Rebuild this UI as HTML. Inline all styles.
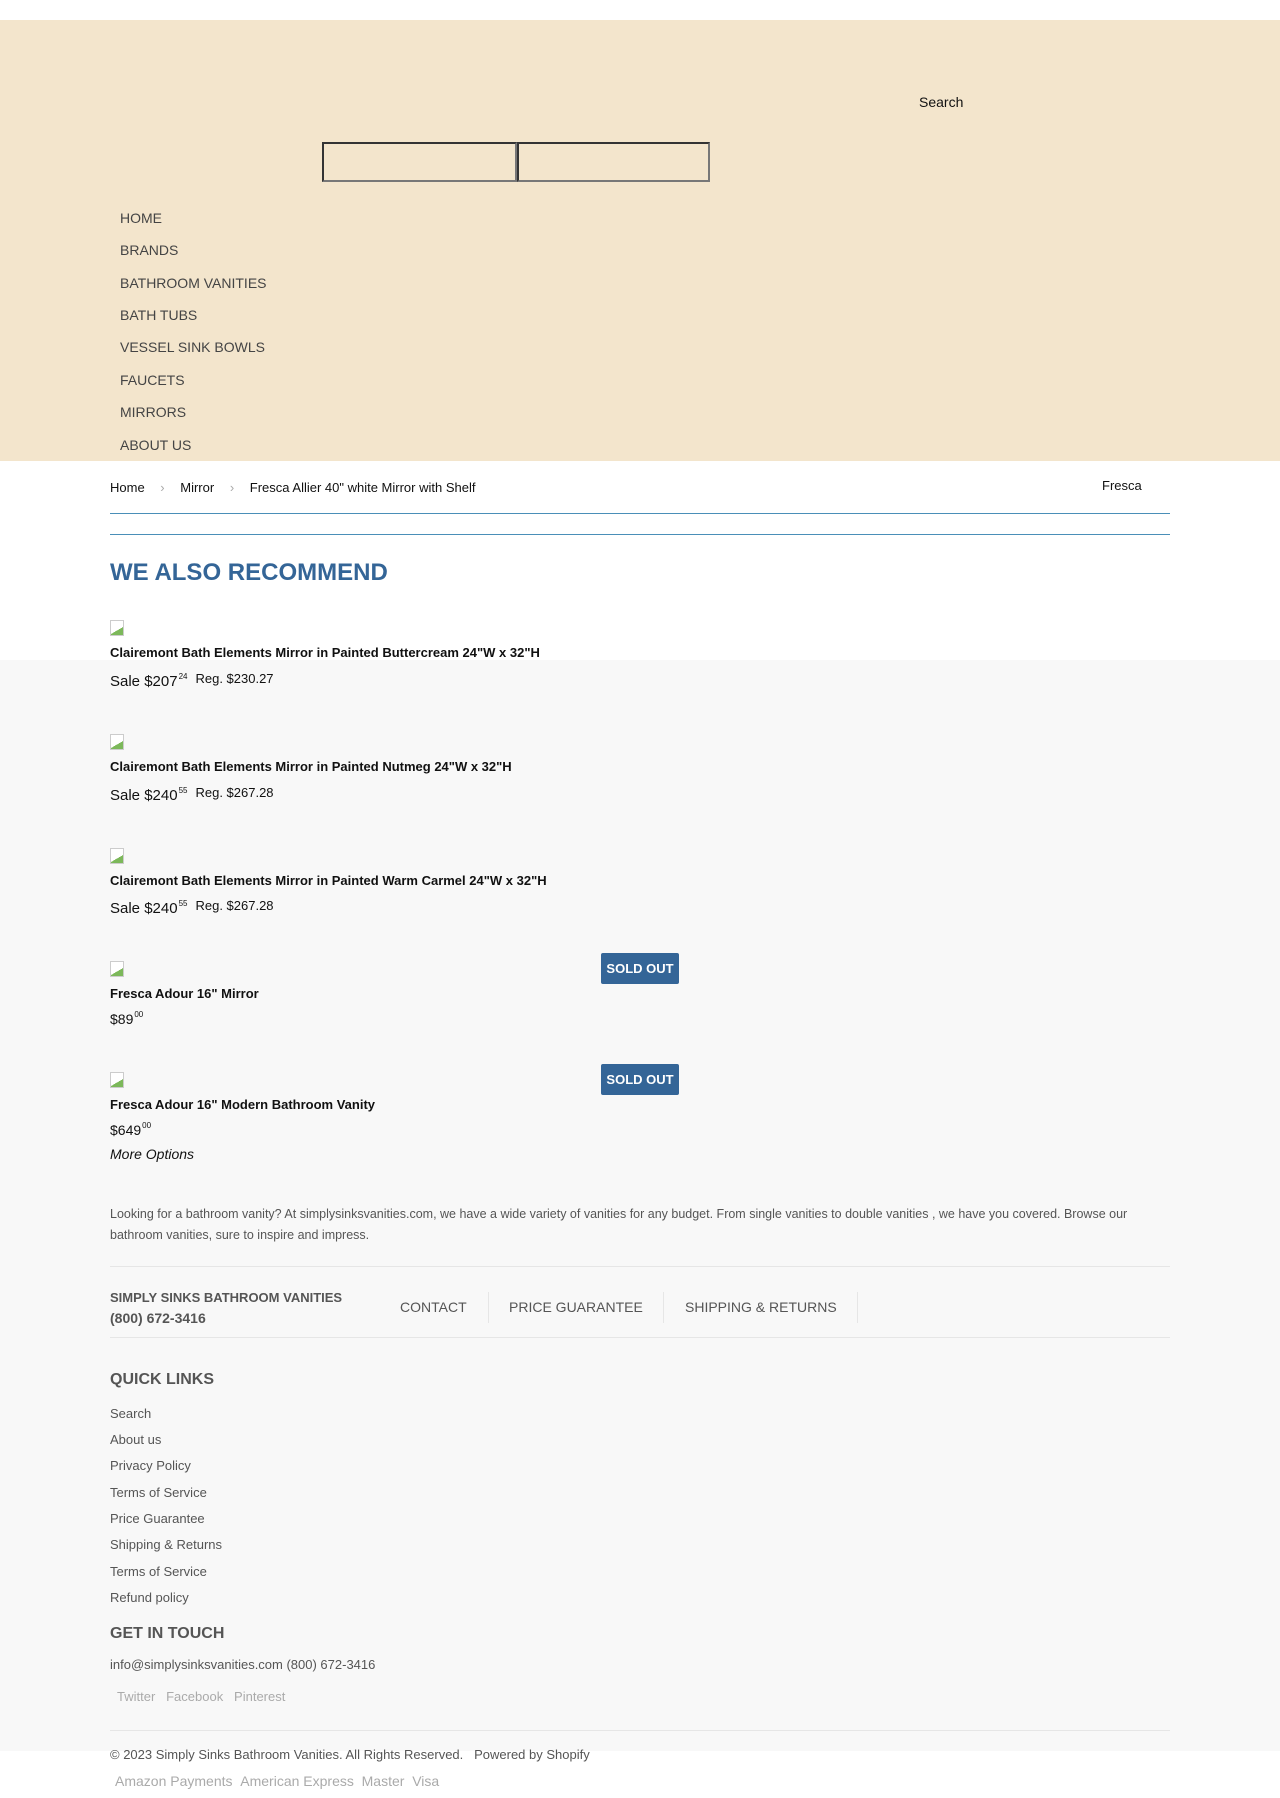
<!DOCTYPE html>
<html><head><meta charset="utf-8"><style>
*{margin:0;padding:0;box-sizing:border-box}
body{width:1280px;height:1798px;position:relative;font-family:"Liberation Sans",Arial,sans-serif;background:#fff;overflow:hidden}
.a{position:absolute;white-space:nowrap;line-height:1}
.nav{position:absolute;left:120px;font-size:14px;color:#444}
.bi{position:absolute;left:110px;width:14px;height:16px;border:1px solid #ccc;background:linear-gradient(150deg,#fff 62%,#7cb85a 62%)}
.t{position:absolute;left:110px;font-size:13px;font-weight:bold;color:#111}
.p{position:absolute;left:110px;font-size:15px;color:#111}
.p sup{font-size:8px;vertical-align:7px;margin-left:1px}
.p .r{font-size:13px;vertical-align:3px;margin-left:8px}
.so{position:absolute;left:601px;width:78px;height:31px;background:#346597;color:#fff;font-size:13px;font-weight:bold;text-align:center;line-height:31px;border-radius:2px}
.ql{position:absolute;left:110px;font-size:13px;color:#555}
</style></head><body>
<div style="position:absolute;top:20px;left:0;width:1280px;height:441px;background:#f3e5cc"></div>
<div style="position:absolute;top:660px;left:0;width:1280px;height:1091px;background:#f8f8f8"></div>
<div class="a" style="left:919px;top:95px;font-size:14px;color:#111">Search</div>
<div style="position:absolute;left:322px;top:142px;width:195px;height:40px;border:2px solid #333;border-bottom-color:#777;border-right-color:#777"></div>
<div style="position:absolute;left:517px;top:142px;width:193px;height:40px;border:2px solid #333;border-bottom-color:#777;border-right-color:#777"></div>
<div class="nav" style="top:210px">HOME</div>
<div class="nav" style="top:242px">BRANDS</div>
<div class="nav" style="top:275px">BATHROOM VANITIES</div>
<div class="nav" style="top:307px">BATH TUBS</div>
<div class="nav" style="top:339px">VESSEL SINK BOWLS</div>
<div class="nav" style="top:372px">FAUCETS</div>
<div class="nav" style="top:404px">MIRRORS</div>
<div class="nav" style="top:437px">ABOUT US</div>
<div class="a" style="left:110px;top:481px;font-size:13px;color:#111">Home <span style="color:#aaa;margin:0 12px">›</span> Mirror <span style="color:#aaa;margin:0 12px">›</span> Fresca Allier 40" white Mirror with Shelf</div>
<div class="a" style="left:1102px;top:479px;font-size:13px;color:#111">Fresca</div>
<div style="position:absolute;left:110px;top:513px;width:1060px;height:1px;background:#4a8fb8"></div>
<div style="position:absolute;left:110px;top:534px;width:1060px;height:1px;background:#4a8fb8"></div>
<div class="a" style="left:110px;top:561px;font-size:24px;font-weight:bold;color:#346597">WE ALSO RECOMMEND</div>

<div class="bi" style="top:620px"></div>
<div class="t" style="top:645px">Clairemont Bath Elements Mirror in Painted Buttercream 24"W x 32"H</div>
<div class="p" style="top:671px">Sale $207<sup>24</sup><span class="r">Reg. $230.27</span></div>

<div class="bi" style="top:734px"></div>
<div class="t" style="top:759px">Clairemont Bath Elements Mirror in Painted Nutmeg 24"W x 32"H</div>
<div class="p" style="top:785px">Sale $240<sup>55</sup><span class="r">Reg. $267.28</span></div>

<div class="bi" style="top:848px"></div>
<div class="t" style="top:873px">Clairemont Bath Elements Mirror in Painted Warm Carmel 24"W x 32"H</div>
<div class="p" style="top:898px">Sale $240<sup>55</sup><span class="r">Reg. $267.28</span></div>

<div class="bi" style="top:961px"></div>
<div class="so" style="top:953px">SOLD OUT</div>
<div class="t" style="top:986px">Fresca Adour 16" Mirror</div>
<div class="p" style="top:1010px;font-size:14px">$89<sup>00</sup></div>

<div class="bi" style="top:1072px"></div>
<div class="so" style="top:1064px">SOLD OUT</div>
<div class="t" style="top:1097px">Fresca Adour 16" Modern Bathroom Vanity</div>
<div class="p" style="top:1121px;font-size:14px">$649<sup>00</sup></div>
<div class="p" style="top:1146px;font-size:14px;font-style:italic">More Options</div>

<div style="position:absolute;left:110px;top:1204px;width:1062px;font-size:12.5px;line-height:21px;color:#555">Looking for a bathroom vanity? At simplysinksvanities.com, we have a wide variety of vanities for any budget. From single vanities to double vanities , we have you covered. Browse our bathroom vanities, sure to inspire and impress.</div>
<div style="position:absolute;left:110px;top:1266px;width:1060px;height:1px;background:#e6e6e6"></div>
<div class="a" style="left:110px;top:1291px;font-size:13px;font-weight:bold;color:#555">SIMPLY SINKS BATHROOM VANITIES</div>
<div class="a" style="left:110px;top:1311px;font-size:14px;font-weight:bold;color:#555">(800) 672-3416</div>
<div class="a" style="left:400px;top:1300px;font-size:14px;color:#555">CONTACT</div>
<div style="position:absolute;left:488px;top:1292px;width:1px;height:31px;background:#e6e6e6"></div>
<div class="a" style="left:509px;top:1300px;font-size:14px;color:#555">PRICE GUARANTEE</div>
<div style="position:absolute;left:663px;top:1292px;width:1px;height:31px;background:#e6e6e6"></div>
<div class="a" style="left:685px;top:1300px;font-size:14px;color:#555">SHIPPING &amp; RETURNS</div>
<div style="position:absolute;left:857px;top:1292px;width:1px;height:31px;background:#e6e6e6"></div>
<div style="position:absolute;left:110px;top:1337px;width:1060px;height:1px;background:#e6e6e6"></div>
<div class="a" style="left:110px;top:1372px;font-size:16px;font-weight:bold;color:#555">QUICK LINKS</div>
<div class="ql" style="top:1406px">Search</div>
<div class="ql" style="top:1432px">About us</div>
<div class="ql" style="top:1458px">Privacy Policy</div>
<div class="ql" style="top:1485px">Terms of Service</div>
<div class="ql" style="top:1511px">Price Guarantee</div>
<div class="ql" style="top:1537px">Shipping &amp; Returns</div>
<div class="ql" style="top:1564px">Terms of Service</div>
<div class="ql" style="top:1590px">Refund policy</div>
<div class="a" style="left:110px;top:1626px;font-size:16px;font-weight:bold;color:#555">GET IN TOUCH</div>
<div class="ql" style="top:1657px">info@simplysinksvanities.com (800) 672-3416</div>
<div class="a" style="left:117px;top:1690px;font-size:13px;color:#aaa">Twitter &nbsp; Facebook &nbsp; Pinterest</div>
<div style="position:absolute;left:110px;top:1730px;width:1060px;height:1px;background:#e6e6e6"></div>
<div class="a" style="left:110px;top:1748px;font-size:13px;color:#555">© 2023 Simply Sinks Bathroom Vanities. All Rights Reserved. &nbsp; Powered by Shopify</div>
<div class="a" style="left:115px;top:1774px;font-size:14px;color:#aaa">Amazon Payments &nbsp;American Express &nbsp;Master &nbsp;Visa</div>
</body></html>
